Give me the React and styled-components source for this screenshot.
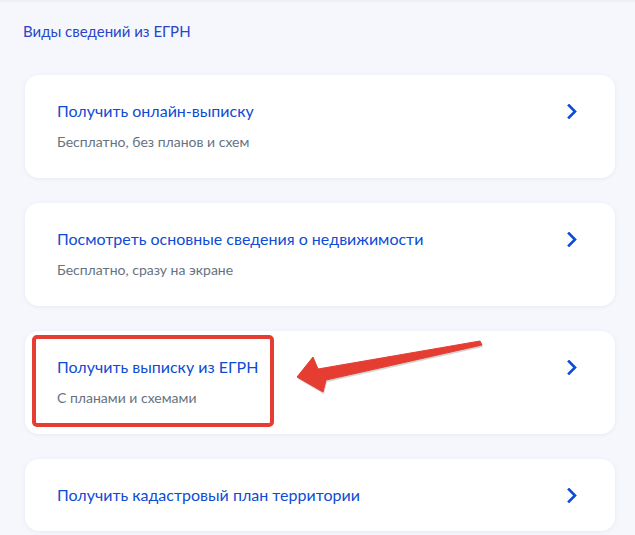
import React from "react";
import styled, { createGlobalStyle } from "styled-components";

const Global = createGlobalStyle`
  html, body { margin: 0; padding: 0; }
  body {
    background: #f5f7fc;
    font-family: Lato, "Noto Sans", sans-serif;
    -webkit-font-smoothing: antialiased;
  }
`;

const Page = styled.div`
  position: relative;
  width: 635px;
  height: 535px;
  overflow: hidden;
  border-top: 2px solid #eef0f5;
  box-sizing: border-box;
  padding: 19px 20px 0 25px;
`;

const Heading = styled.h2`
  margin: 0 0 0 -2px;
  font-size: 15px;
  line-height: 20px;
  font-weight: 400;
  color: #2a45c9;
`;

const List = styled.div`
  display: flex;
  flex-direction: column;
  gap: 25px;
  margin-top: 34px;
  width: 590px;
`;

const Card = styled.div`
  position: relative;
  display: flex;
  align-items: flex-start;
  justify-content: space-between;
  background: #fff;
  border-radius: 14px;
  box-shadow: 0 1px 4px rgba(60, 80, 140, 0.08);
  padding: 26px 38px 26px 32px;
`;

const Texts = styled.div`
  display: flex;
  flex-direction: column;
  gap: 11px;
`;

const Title = styled.div`
  font-size: 16px;
  line-height: 20px;
  color: #0d4cd3;
`;

const Sub = styled.div`
  font-size: 14px;
  line-height: 20px;
  color: #66727f;
`;

const ChevronBox = styled.div`
  height: 20px;
  display: flex;
  align-items: center;
`;

const Highlight = styled.div`
  position: absolute;
  left: 7px;
  top: 4px;
  width: 242px;
  height: 92px;
  box-sizing: border-box;
  border: 4px solid #e53d31;
  border-radius: 5px;
  pointer-events: none;
`;

const ArrowSvg = styled.svg`
  position: absolute;
  left: 0;
  top: 0;
  pointer-events: none;
`;

const Chevron = () => (
  <ChevronBox>
    <svg width="10" height="15" viewBox="0 0 10 15">
      <path d="M2 1.5 L8 7.5 L2 13.5" fill="none" stroke="#0d4cd3" strokeWidth="2.6" strokeLinecap="square" />
    </svg>
  </ChevronBox>
);

const items = [
  { title: "Получить онлайн-выписку", sub: "Бесплатно, без планов и схем" },
  { title: "Посмотреть основные сведения о недвижимости", sub: "Бесплатно, сразу на экране" },
  { title: "Получить выписку из ЕГРН", sub: "С планами и схемами", mark: true },
  { title: "Получить кадастровый план территории" },
];

export default function App() {
  return (
    <>
      <Global />
      <Page>
        <Heading>Виды сведений из ЕГРН</Heading>
        <List>
          {items.map((it) => (
            <Card key={it.title}>
              <Texts>
                <Title>{it.title}</Title>
                {it.sub && <Sub>{it.sub}</Sub>}
              </Texts>
              <Chevron />
              {it.mark && <Highlight />}
            </Card>
          ))}
        </List>
        <ArrowSvg width="635" height="535" viewBox="0 0 635 535">
          <polygon
            points="480,339 482,343 326,378 323,390 297,375 313,355 318,367"
            fill="#a9a9a9"
            opacity="0.5"
            transform="translate(1,2)"
          />
          <polygon
            points="480,339 482,343 326,378 323,390 297,375 313,355 318,367"
            fill="#e53d31"
            strokeLinejoin="round"
            stroke="#e53d31"
            strokeWidth="1"
          />
        </ArrowSvg>
      </Page>
    </>
  );
}
